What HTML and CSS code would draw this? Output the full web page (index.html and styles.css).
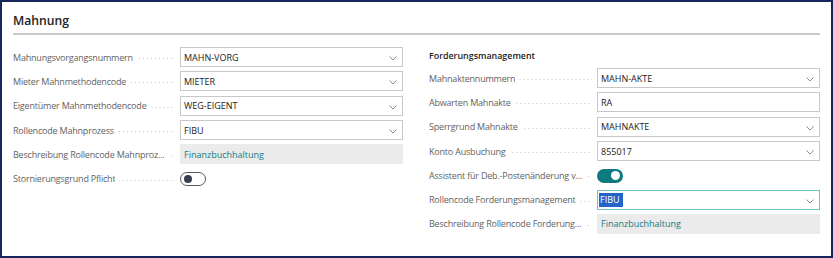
FILE: index.html
```html
<!DOCTYPE html>
<html lang="de">
<head>
<meta charset="utf-8">
<title>Mahnung</title>
<link rel="stylesheet" href="styles.css">
</head>
<body>
<div class="frame">
  <h2 class="title">Mahnung</h2>
  <div class="cols">
    <div class="col">
      <div class="row"><span class="label">Mahnungsvorgangsnummern</span><span class="leader"></span><div class="field select">MAHN-VORG<svg class="chev" viewBox="0 0 8 5"><path d="M0.5 0.5 L4 4 L7.5 0.5"/></svg></div></div>
      <div class="row"><span class="label">Mieter Mahnmethodencode</span><span class="leader"></span><div class="field select">MIETER<svg class="chev" viewBox="0 0 8 5"><path d="M0.5 0.5 L4 4 L7.5 0.5"/></svg></div></div>
      <div class="row"><span class="label">Eigentümer Mahnmethodencode</span><span class="leader"></span><div class="field select">WEG-EIGENT<svg class="chev" viewBox="0 0 8 5"><path d="M0.5 0.5 L4 4 L7.5 0.5"/></svg></div></div>
      <div class="row"><span class="label">Rollencode Mahnprozess</span><span class="leader"></span><div class="field select">FIBU<svg class="chev" viewBox="0 0 8 5"><path d="M0.5 0.5 L4 4 L7.5 0.5"/></svg></div></div>
      <div class="row"><span class="label" title="Beschreibung Rollencode Mahnprozess">Beschreibung Rollencode Mahnproz...</span><span class="leader"></span><div class="field readonly">Finanzbuchhaltung</div></div>
      <div class="row"><span class="label">Stornierungsgrund Pflicht</span><span class="leader"></span><div class="fieldwrap"><span class="toggle off"><span class="knob"></span></span></div></div>
    </div>
    <div class="col">
      <div class="group">Forderungsmanagement</div>
      <div class="row"><span class="label">Mahnaktennummern</span><span class="leader"></span><div class="field select">MAHN-AKTE<svg class="chev" viewBox="0 0 8 5"><path d="M0.5 0.5 L4 4 L7.5 0.5"/></svg></div></div>
      <div class="row"><span class="label">Abwarten Mahnakte</span><span class="leader"></span><div class="field">RA</div></div>
      <div class="row"><span class="label">Sperrgrund Mahnakte</span><span class="leader"></span><div class="field select">MAHNAKTE<svg class="chev" viewBox="0 0 8 5"><path d="M0.5 0.5 L4 4 L7.5 0.5"/></svg></div></div>
      <div class="row"><span class="label">Konto Ausbuchung</span><span class="leader"></span><div class="field select">855017<svg class="chev" viewBox="0 0 8 5"><path d="M0.5 0.5 L4 4 L7.5 0.5"/></svg></div></div>
      <div class="row"><span class="label" title="Assistent für Deb.-Postenänderung verwenden">Assistent für Deb.-Postenänderung v...</span><span class="leader"></span><div class="fieldwrap"><span class="toggle on"><span class="knob"></span></span></div></div>
      <div class="row"><span class="label">Rollencode Forderungsmanagement</span><span class="leader"></span><div class="field select focus"><span class="sel">FIBU</span><svg class="chev" viewBox="0 0 8 5"><path d="M0.5 0.5 L4 4 L7.5 0.5"/></svg></div></div>
      <div class="row"><span class="label" title="Beschreibung Rollencode Forderungsmanagement">Beschreibung Rollencode Forderung...</span><span class="leader"></span><div class="field readonly">Finanzbuchhaltung</div></div>
    </div>
  </div>
</div>
</body>
</html>
```
FILE: styles.css
```css
* { box-sizing: border-box; }
html, body { margin: 0; padding: 0; background: #ffffff; }
body { font-family: "Open Sans", "Noto Sans", sans-serif; }

.frame {
  width: 833px;
  height: 258px;
  border: 2px solid #16265a;
  padding: 0 11px 0 11px;
  background: #ffffff;
  overflow: hidden;
}

.title {
  margin: 0;
  padding: 9px 0 0 0;
  height: 33px;
  font-size: 12.2px;
  line-height: 20px;
  font-weight: 600;
  color: #222222;
  border-bottom: 2px solid #c9c9c9;
}

.cols {
  display: grid;
  grid-template-columns: 390px 391px;
  column-gap: 26px;
  padding-top: 10px;
}

.col { display: flex; flex-direction: column; }

.group {
  height: 21px;
  line-height: 21px;
  font-size: 8.9px;
  font-weight: 600;
  color: #222222;
}

.row {
  height: 24.3px;
  display: flex;
  align-items: center;
}

.label {
  font-size: 9px;
  letter-spacing: -0.2px;
  color: #5f5f5f;
  white-space: nowrap;
  overflow: hidden;
  text-overflow: ellipsis;
  min-width: 0;
  flex: 0 1 auto;
}

.leader {
  flex: 1 0 1px;
  align-self: center;
  height: 1px;
  margin: 3px 5px 0 4px;
  background-image: linear-gradient(to right, #c4c4c4 1px, transparent 1px);
  background-size: 4px 1px;
  background-repeat: repeat-x;
  background-position: right center;
}

.field {
  flex: 0 0 223px;
  height: 20px;
  border: 1px solid #c8c8c8;
  display: flex;
  align-items: center;
  padding: 0 0 0 3px;
  font-size: 9px;
  color: #212121;
  position: relative;
}

.fieldwrap {
  flex: 0 0 223px;
  height: 20px;
  display: flex;
  align-items: center;
}

.select { padding-right: 20px; }

.chev {
  position: absolute;
  right: 5px;
  top: 8px;
  width: 8px;
  height: 5px;
  fill: none;
  stroke: #8c8c8c;
  stroke-width: 1;
}

.readonly {
  border-color: #ebebeb;
  background: #ebebeb;
  color: #167b83;
}

.focus {
  border: 1.5px solid #6cc4c2;
  padding-left: 1px;
}

.sel {
  background: #2463c8;
  color: #ffffff;
  padding: 1px 3px 1px 1px;
  line-height: 12px;
}

.toggle {
  width: 26px;
  height: 14px;
  border-radius: 7px;
  display: flex;
  align-items: center;
  padding: 0 2px;
  margin-top: 1px;
}

.toggle .knob {
  width: 8px;
  height: 8px;
  border-radius: 50%;
}

.toggle.off {
  border: 1px solid #5a5a5a;
  background: #ffffff;
  justify-content: flex-start;
}

.toggle.off .knob { background: #36404f; margin-left: 1px; }

.toggle.on {
  background: #0d7a80;
  justify-content: flex-end;
}

.toggle.on .knob { background: #ffffff; width: 9px; height: 9px; margin-right: 1px; }
```
